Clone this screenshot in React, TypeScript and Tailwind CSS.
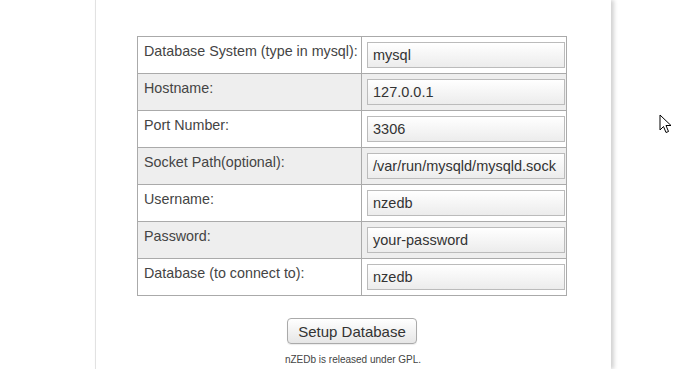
import React from "react";

const fields = [
  { label: "Database System (type in mysql):", value: "mysql" },
  { label: "Hostname:", value: "127.0.0.1" },
  { label: "Port Number:", value: "3306" },
  { label: "Socket Path(optional):", value: "/var/run/mysqld/mysqld.sock" },
  { label: "Username:", value: "nzedb" },
  { label: "Password:", value: "your-password" },
  { label: "Database (to connect to):", value: "nzedb" },
];

const Cursor = () => (
  <svg
    className="absolute left-[659px] top-[114px]"
    width="14"
    height="21"
    viewBox="0 0 14 21"
  >
    <path
      d="M1 1 L1 16 L4.5 12.5 L7 18.5 L9.5 17.5 L7 11.5 L12 11.5 Z"
      fill="#fff"
      stroke="#000"
      strokeWidth="1"
      strokeLinejoin="miter"
    />
  </svg>
);

export default function App() {
  return (
    <div className="relative h-[369px] w-[686px] overflow-hidden bg-white font-['Liberation_Sans',Arial,sans-serif]">
      <div className="ml-[95px] h-full w-[516px] border-l border-[#e2e2e2] bg-white shadow-[3px_0_4px_rgba(0,0,0,0.18)]">
        <div className="flex flex-col items-center pt-[36px]">
          <table className="ml-[-3px] w-[430px] table-fixed border-collapse border border-[#aaa] text-[14.3px] text-[#444]">
            <tbody>
              {fields.map((f, i) => (
                <tr key={f.label} className={i % 2 === 1 ? "bg-[#eee]" : "bg-white"}>
                  <td className="h-[37px] w-[224px] whitespace-nowrap border border-[#aaa] pl-[6px] pr-0 pt-[6px] align-top leading-[16px]">
                    {f.label}
                  </td>
                  <td className="h-[37px] border border-[#aaa] py-0 pl-[5px] pr-0 align-middle">
                    <div className="flex h-[26px] w-[198px] items-center overflow-hidden whitespace-nowrap border border-[#bbb] bg-gradient-to-b from-white to-[#ececec] pl-[5px] text-[14.5px] leading-none text-[#333]">
                      {f.value}
                    </div>
                  </td>
                </tr>
              ))}
            </tbody>
          </table>
          <button className="mt-[22px] ml-[-3px] h-[26px] w-[130px] rounded-[4px] border border-[#aaa] bg-gradient-to-b from-white to-[#e6e6e6] text-[15px] leading-none text-[#333] shadow-[0_1px_1px_rgba(0,0,0,0.08)]">
            Setup Database
          </button>
          <p className="mt-[10px] ml-[-1px] text-[10px] leading-[12px] text-[#444]">
            nZEDb is released under GPL.
          </p>
        </div>
      </div>
      <Cursor />
    </div>
  );
}
